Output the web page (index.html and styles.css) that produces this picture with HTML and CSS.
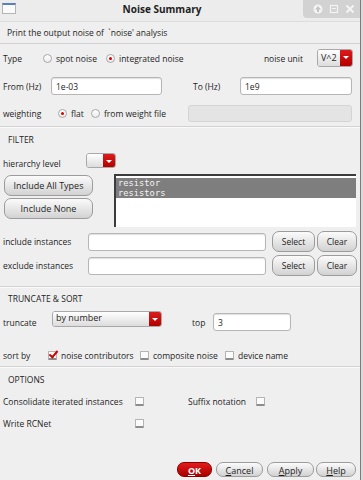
FILE: index.html
```html
<!DOCTYPE html>
<html>
<head>
<meta charset="utf-8">
<title>Noise Summary</title>
<link rel="stylesheet" href="styles.css">
</head>
<body>
<div class="window">
    <div class="titlebar">
        <span class="app-icon"></span>
        <span class="title">Noise Summary</span>
        <span class="wm-buttons">
            <svg width="10" height="10" viewBox="0 0 10 10"><circle cx="5" cy="5" r="4.5" fill="#f4f4f4"/><path d="M5 2 L8 5.5 H6 V8 H4 V5.5 H2 Z" fill="#c4c4c4"/></svg>
            <svg width="10" height="10" viewBox="0 0 10 10"><rect x="1.5" y="1.5" width="7" height="7" fill="none" stroke="#f4f4f4" stroke-width="1.2"/><rect x="3" y="4" width="4" height="1" fill="#f4f4f4"/></svg>
            <svg width="10" height="10" viewBox="0 0 10 10"><path d="M1.5 1.5 L8.5 8.5 M8.5 1.5 L1.5 8.5" stroke="#f4f4f4" stroke-width="2"/></svg>
        </span>
    </div>

    <div class="desc">Print the output noise of &nbsp;`noise' analysis</div>

    <div class="section">
        <div class="row row-type">
            <span class="lbl w40">Type</span>
            <span class="opt w63"><span class="radio"></span>spot noise</span>
            <span class="opt"><span class="radio on"></span>integrated noise</span>
            <span class="lbl unit-lbl">noise unit</span>
            <span class="combo combo-unit"><span class="combo-txt">V^2</span><span class="combo-btn"></span></span>
        </div>
        <div class="row row-from">
            <span class="lbl w48">From (Hz)</span>
            <span class="field w111">1e-03</span>
            <span class="lbl to-lbl">To (Hz)</span>
            <span class="field w112">1e9</span>
        </div>
        <div class="row row-weight">
            <span class="lbl w55">weighting</span>
            <span class="opt w33"><span class="radio on"></span>flat</span>
            <span class="opt w97"><span class="radio"></span>from weight file</span>
            <span class="field disabled w164"></span>
        </div>
    </div>

    <div class="section filter">
        <div class="head">FILTER</div>
        <div class="row row-hier">
            <span class="lbl w83">hierarchy level</span>
            <span class="combo combo-hier"><span class="combo-txt"></span><span class="combo-btn"></span></span>
        </div>
        <div class="types">
            <div class="type-buttons">
                <span class="btn">Include All Types</span>
                <span class="btn">Include None</span>
            </div>
            <div class="listbox">
                <div class="item sel">resistor</div>
                <div class="item sel">resistors</div>
            </div>
        </div>
        <div class="row row-inst">
            <span class="lbl w85">include instances</span>
            <span class="field w178"></span>
            <span class="btn small w43">Select</span>
            <span class="btn small w40">Clear</span>
        </div>
        <div class="row row-inst">
            <span class="lbl w85">exclude instances</span>
            <span class="field w178"></span>
            <span class="btn small w43">Select</span>
            <span class="btn small w40">Clear</span>
        </div>
    </div>

    <div class="section trunc">
        <div class="head">TRUNCATE &amp; SORT</div>
        <div class="row row-trunc">
            <span class="lbl w49">truncate</span>
            <span class="combo combo-trunc"><span class="combo-txt">by number</span><span class="combo-btn"></span></span>
            <span class="lbl top-lbl">top</span>
            <span class="field w78">3</span>
        </div>
        <div class="row row-sort">
            <span class="lbl w45">sort by</span>
            <span class="opt w92"><span class="check on"></span>noise contributors</span>
            <span class="opt w85"><span class="check"></span>composite noise</span>
            <span class="opt"><span class="check"></span>device name</span>
        </div>
    </div>

    <div class="section options">
        <div class="head">OPTIONS</div>
        <div class="row row-opt">
            <span class="lbl w132">Consolidate iterated instances</span>
            <span class="check"></span>
            <span class="lbl suffix-lbl">Suffix notation</span>
            <span class="check"></span>
        </div>
        <div class="row row-opt">
            <span class="lbl w132">Write RCNet</span>
            <span class="check"></span>
        </div>
    </div>

    <div class="footer">
        <span class="btn ok"><u>O</u>K</span>
        <span class="btn cancel"><u>C</u>ancel</span>
        <span class="btn apply"><u>A</u>pply</span>
        <span class="btn help"><u>H</u>elp</span>
    </div>
</div>
</body>
</html>
```

FILE: styles.css
```css
* { box-sizing: border-box; }

body {
    background: #d9d9d9;
    color: #1e1e1e;
    font-family: "Open Sans", "DejaVu Sans", sans-serif;
    font-size: 8.5px;
    height: 480px;
    margin: 0;
    overflow: hidden;
    width: 363px;
}

.window {
    background: #efefef;
    border-right: 1px solid #7c7c7c;
    display: flex;
    flex-direction: column;
    height: 480px;
    width: 361px;
}

/* title bar */
.titlebar {
    align-items: center;
    background: #ececec;
    border-bottom: 1px solid #dcdcdc;
    display: flex;
    flex: 0 0 22px;
    position: relative;
}

.app-icon {
    background: #fafafa;
    border: 1px solid #b4b4b4;
    border-top: 2px solid #5a7fbf;
    flex: none;
    height: 11px;
    margin: -4px 0 0 2px;
    width: 14px;
}

.title {
    flex: 1;
    font-size: 10px;
    font-weight: bold;
    margin-left: -16px;
    margin-top: -3px;
    padding-right: 36px;
    text-align: center;
}

.wm-buttons {
    align-items: center;
    background: #d2d2d2;
    border-bottom-left-radius: 4px;
    display: flex;
    gap: 6px;
    height: 18px;
    padding: 0 5px 0 10px;
    position: absolute;
    right: 0;
    top: 0;
}

.desc {
    align-items: center;
    border-bottom: 1px solid #d2d2d2;
    display: flex;
    flex: 0 0 22px;
    padding-left: 7px;
}

.section {
    border-bottom: 1px solid #d2d2d2;
    box-shadow: 0 1px 0 #fafafa;
    padding: 0 0 0 3px;
}

.row {
    align-items: center;
    display: flex;
}

.head {
    align-items: center;
    display: flex;
    height: 20px;
    padding-left: 5px;
}

.lbl { flex: none; white-space: nowrap; }
.opt { align-items: center; display: flex; flex: none; white-space: nowrap; }

.w33 { width: 33px; }
.w40 { width: 40px; }
.w43 { width: 43px; }
.w45 { width: 45px; }
.w48 { width: 48px; }
.w49 { width: 49px; }
.w55 { width: 55px; }
.w63 { width: 63px; }
.w78 { width: 78px; }
.w83 { width: 83px; }
.w85 { width: 85px; }
.w92 { width: 92px; }
.w97 { width: 97px; }
.w111 { width: 111px; }
.w112 { width: 112px; }
.w132 { width: 132px; }
.w164 { width: 164px; }
.w178 { width: 178px; }

/* radio and check */
.radio {
    background: linear-gradient(#ffffff, #ececec);
    border: 1px solid #a8a8a8;
    border-radius: 50%;
    flex: none;
    height: 9px;
    margin-right: 4px;
    position: relative;
    width: 9px;
}

.radio.on::after {
    background: #d40000;
    border-radius: 50%;
    content: "";
    height: 3px;
    left: 2px;
    position: absolute;
    top: 2px;
    width: 3px;
}

.check {
    background: #fbfbfb;
    border: 1px solid #b4b4b4;
    border-bottom: 2px solid #8c8c8c;
    border-radius: 1px;
    flex: none;
    height: 9px;
    margin-right: 4px;
    position: relative;
    width: 9px;
}

.check.on::after {
    border-bottom: 2px solid #d00000;
    border-right: 2px solid #d00000;
    content: "";
    height: 7px;
    left: 2px;
    position: absolute;
    top: -3px;
    transform: rotate(40deg);
    width: 3px;
}

/* fields */
.field {
    align-items: center;
    background: #fff;
    border: 1px solid #b6b6b6;
    border-radius: 3px;
    box-shadow: inset 0 1px 1px #e0e0e0;
    display: flex;
    flex: none;
    height: 18px;
    padding-left: 4px;
}

.field.disabled {
    background: #e4e4e4;
    border-color: #d4d4d4;
    box-shadow: none;
    height: 17px;
}

/* combos */
.combo {
    border: 1px solid #a8a8a8;
    border-radius: 3px;
    display: flex;
    flex: none;
    overflow: hidden;
}

.combo-txt {
    background: linear-gradient(#ffffff, #dcdcdc);
    flex: 1;
    line-height: 11px;
    padding-left: 3px;
}

.combo-btn {
    background: linear-gradient(#dc1c1c, #b40000);
    flex: 0 0 12px;
    position: relative;
}

.combo-btn::after {
    border-left: 3px solid transparent;
    border-right: 3px solid transparent;
    border-top: 3px solid #fff;
    content: "";
    left: 3px;
    position: absolute;
    top: 6px;
}

.combo-unit { height: 18px; margin-left: 14px; width: 36px; }
.combo-unit .combo-txt { font-size: 9px; line-height: 16px; }
.combo-hier { height: 15px; width: 30px; }
.combo-trunc { height: 16px; margin-top: -6px; width: 110px; }
.combo-trunc .combo-txt { font-size: 9px; line-height: 11px; }

/* buttons */
.btn {
    align-items: center;
    background: linear-gradient(#fbfbfb, #d2d2d2);
    border: 1px solid #9c9c9c;
    border-radius: 7px;
    display: flex;
    flex: none;
    justify-content: center;
    white-space: nowrap;
}

.btn u { text-decoration-thickness: 1px; text-underline-offset: 1px; }

/* first section */
.row-type { height: 28px; padding-right: 7px; padding-top: 1px; }
.unit-lbl { margin-left: auto; }
.row-type .combo-unit { margin-top: -2px; }
.row-from { height: 28px; }
.to-lbl { margin-left: 31px; width: 47px; }
.row-weight { height: 26px; }

/* filter */
.filter .head { height: 22px; padding-top: 2px; }
.row-hier { height: 25px; }
.row-hier .lbl { padding-top: 3px; }
.row-hier .combo { margin-top: -3px; }

.types {
    display: flex;
    height: 55px;
    padding-right: 4px;
}

.type-buttons {
    display: flex;
    flex-direction: column;
    gap: 2px;
    padding: 1px 0 0 1px;
    width: 111px;
}

.type-buttons .btn {
    font-size: 9px;
    height: 21px;
    width: 89px;
}

.listbox {
    background: #fff;
    border-left: 2px solid #3c3c3c;
    border-top: 2px solid #3c3c3c;
    flex: 1;
    height: 53px;
    padding-top: 2px;
}

.item {
    color: #f4f4f4;
    font-family: "DejaVu Sans Mono", monospace;
    font-size: 8.75px;
    height: 10px;
    line-height: 10px;
    padding-left: 2px;
}

.item.sel { background: #7e7e7e; }

.row-inst { height: 23px; margin-top: 1px; }
.row-inst .field { margin-right: 6px; }
.btn.small { font-size: 8.5px; height: 21px; margin-right: 2px; }

.filter { padding-bottom: 9px; }

/* truncate */
.trunc .head { height: 22px; }
.row-trunc { height: 25px; }
.row-trunc .lbl { padding-top: 1px; }
.top-lbl { margin-left: 30px; width: 21px; }
.row-trunc .field { height: 18px; margin-top: 1px; }
.row-sort { height: 22px; margin-top: 10px; }

/* options */
.options { border-bottom: none; box-shadow: none; }
.options .head { height: 23px; padding-top: 2px; }
.row-opt { height: 22px; }
.suffix-lbl { margin-left: 40px; width: 68px; }

/* footer */
.footer {
    display: flex;
    justify-content: flex-end;
    margin-top: auto;
    padding: 0 4px 3px 0;
}

.footer .btn { font-size: 9px; height: 15px; padding-top: 1px; }
.footer .cancel { margin-left: 4px; width: 47px; }
.footer .apply { margin-left: 4px; width: 47px; }
.footer .help { margin-left: 2px; width: 40px; }

.btn.ok {
    background: linear-gradient(#e41a1a, #a80000);
    border-color: #8a0000;
    color: #fff;
    font-weight: bold;
    width: 35px;
}
```
